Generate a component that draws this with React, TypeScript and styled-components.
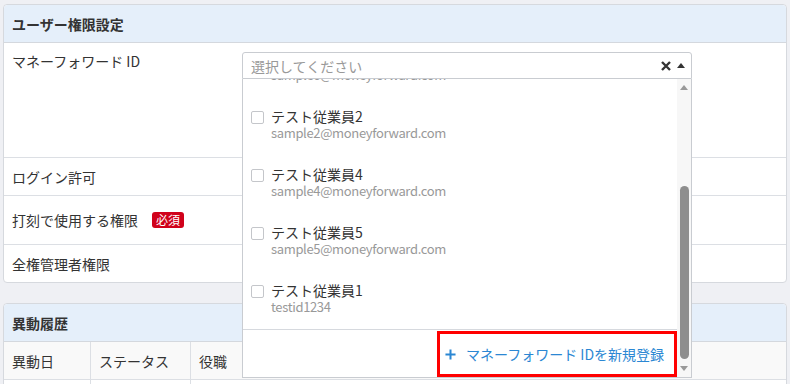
import React from "react";
import styled, { createGlobalStyle } from "styled-components";

const GlobalStyle = createGlobalStyle`
  body {
    margin: 0;
    background: #eff0f4;
    font-family: "Noto Sans CJK JP", "Noto Sans", sans-serif;
    font-size: 14px;
    color: #333;
  }
`;

type Employee = { name: string; email: string };

const employees: Employee[] = [
  { name: "テスト従業員6", email: "sample6@moneyforward.com" },
  { name: "テスト従業員2", email: "sample2@moneyforward.com" },
  { name: "テスト従業員4", email: "sample4@moneyforward.com" },
  { name: "テスト従業員5", email: "sample5@moneyforward.com" },
  { name: "テスト従業員1", email: "testid1234" },
];

const App = () => {
  return (
    <>
      <GlobalStyle />
      <Page>
        <Card>
          <CardHeader>ユーザー権限設定</CardHeader>
          <Row $height={114} $align="flex-start">
            <Label $top={9}>マネーフォワード ID</Label>
            <Value>
              <SelectWrap>
                <Select>
                  <Placeholder>選択してください</Placeholder>
                  <ClearIcon viewBox="0 0 10 10">
                    <path d="M1 1 L9 9 M9 1 L1 9" />
                  </ClearIcon>
                  <Caret $dir="up" />
                </Select>
                <Dropdown>
                  <ListColumn>
                    <Options>
                      <OptionsInner>
                        {employees.map((e) => (
                          <Option key={e.name}>
                            <Check />
                            <OptionText>
                              <Name>{e.name}</Name>
                              <Email>{e.email}</Email>
                            </OptionText>
                          </Option>
                        ))}
                      </OptionsInner>
                    </Options>
                    <Footer>
                      <AddButton>
                        <PlusIcon viewBox="0 0 12 12">
                          <path d="M6 0.5 V11.5 M0.5 6 H11.5" />
                        </PlusIcon>
                        マネーフォワード IDを新規登録
                      </AddButton>
                    </Footer>
                  </ListColumn>
                  <Scrollbar>
                    <ArrowBox>
                      <Caret $dir="up" $color="#999" />
                    </ArrowBox>
                    <Track>
                      <Thumb $top={90} $height={173} />
                    </Track>
                    <ArrowBox>
                      <Caret $dir="down" $color="#999" />
                    </ArrowBox>
                  </Scrollbar>
                </Dropdown>
              </SelectWrap>
            </Value>
          </Row>
          <Row $height={37}>
            <Label>ログイン許可</Label>
            <Value />
          </Row>
          <Row $height={48}>
            <Label>
              打刻で使用する権限<Badge>必須</Badge>
            </Label>
            <Value />
          </Row>
          <Row $height={37} $last>
            <Label>全権管理者権限</Label>
            <Value />
          </Row>
        </Card>

        <Card>
          <CardHeader>異動履歴</CardHeader>
          <TableRow $head>
            <Cell>異動日</Cell>
            <Cell>ステータス</Cell>
            <Cell>役職</Cell>
          </TableRow>
          <TableRow>
            <Cell />
            <Cell />
            <Cell />
          </TableRow>
        </Card>
      </Page>
    </>
  );
};

export default App;

const Page = styled.div`
  padding: 4px 3px;
  display: flex;
  flex-direction: column;
  gap: 20px;
`;

const Card = styled.div`
  background: #fff;
  border: 1px solid #d6d9de;
  border-radius: 4px;
`;

const CardHeader = styled.div`
  height: 37px;
  display: flex;
  align-items: center;
  padding: 0 8px;
  background: #e5effa;
  border-bottom: 1px solid #d4d8de;
  border-radius: 4px 4px 0 0;
  font-weight: bold;
  line-height: 18px;
`;

const Row = styled.div<{ $height: number; $align?: string; $last?: boolean }>`
  display: grid;
  grid-template-columns: 238px 1fr;
  align-items: ${(p) => p.$align || "center"};
  height: ${(p) => p.$height}px;
  border-bottom: ${(p) => (p.$last ? "none" : "1px solid #dcdfe4")};
`;

const Label = styled.div<{ $top?: number }>`
  display: flex;
  align-items: center;
  padding: ${(p) => p.$top || 0}px 8px 0;
  line-height: 18px;
`;

const Value = styled.div`
  align-self: stretch;
  padding-top: 9px;
`;

const Badge = styled.span`
  margin-left: 14px;
  height: 16px;
  padding: 0 4px;
  border-radius: 3px;
  background: #d0021b;
  color: #fff;
  font-size: 12px;
  line-height: 16px;
`;

const SelectWrap = styled.div`
  position: relative;
  width: 450px;
`;

const Select = styled.div`
  height: 25px;
  border: 1px solid #c9ccd1;
  border-radius: 3px 3px 0 0;
  display: flex;
  align-items: center;
  padding: 0 6px 0 8px;
  background: #fff;
`;

const Placeholder = styled.span`
  flex: 1;
  color: #999;
  line-height: 18px;
`;

const ClearIcon = styled.svg`
  width: 10px;
  height: 10px;
  margin-right: 6px;
  stroke: #333;
  stroke-width: 2.4;
  fill: none;
`;

const Caret = styled.span<{ $dir: "up" | "down"; $color?: string }>`
  width: 0;
  height: 0;
  border-left: 4px solid transparent;
  border-right: 4px solid transparent;
  ${(p) =>
    p.$dir === "up"
      ? `border-bottom: 5px solid ${p.$color || "#333"};`
      : `border-top: 5px solid ${p.$color || "#333"};`}
`;

const Dropdown = styled.div`
  position: absolute;
  z-index: 10;
  top: 100%;
  left: 0;
  width: 450px;
  height: 299px;
  box-sizing: border-box;
  background: #fff;
  border: 1px solid #c9ccd1;
  border-top: none;
  display: flex;
`;

const ListColumn = styled.div`
  flex: 1;
  display: flex;
  flex-direction: column;
  min-width: 0;
`;

const Options = styled.div`
  height: 250px;
  overflow: hidden;
  border-bottom: 1px solid #d6d9de;
`;

const OptionsInner = styled.div`
  margin-top: -42px;
`;

const Option = styled.div`
  height: 58px;
  box-sizing: border-box;
  padding: 12px 8px;
  display: flex;
  align-items: flex-start;
  gap: 7px;
`;

const Check = styled.span`
  width: 11px;
  height: 11px;
  margin-top: 4px;
  border: 1px solid #c4c6ca;
  border-radius: 2px;
  background: #fff;
`;

const OptionText = styled.div`
  display: flex;
  flex-direction: column;
`;

const Name = styled.span`
  font-size: 14px;
  line-height: 18px;
  color: #333;
`;

const Email = styled.span`
  font-size: 13px;
  line-height: 16px;
  letter-spacing: -0.35px;
  color: #999;
`;

const Footer = styled.div`
  flex: 1;
  display: flex;
  justify-content: flex-end;
  align-items: flex-start;
  padding-top: 1px;
`;

const AddButton = styled.button`
  width: 240px;
  height: 46px;
  box-sizing: border-box;
  border: 3px solid #ff0000;
  background: #fff;
  color: #2b87d3;
  font-family: inherit;
  font-size: 14px;
  line-height: 18px;
  display: flex;
  align-items: center;
  padding: 0 0 0 5px;
  white-space: nowrap;
`;

const PlusIcon = styled.svg`
  width: 11px;
  height: 11px;
  margin-right: 10px;
  stroke: #2b87d3;
  stroke-width: 2.2;
  fill: none;
`;

const Scrollbar = styled.div`
  width: 14px;
  background: #f7f7f7;
  display: flex;
  flex-direction: column;
`;

const ArrowBox = styled.div`
  height: 17px;
  display: flex;
  align-items: center;
  justify-content: center;
`;

const Track = styled.div`
  flex: 1;
  display: flex;
  justify-content: center;
`;

const Thumb = styled.div<{ $top: number; $height: number }>`
  width: 9px;
  margin-top: ${(p) => p.$top}px;
  height: ${(p) => p.$height}px;
  border-radius: 5px;
  background: #8e8e8e;
`;

const TableRow = styled.div<{ $head?: boolean }>`
  display: grid;
  grid-template-columns: 87px 100px 1fr;
  height: 37px;
  background: ${(p) => (p.$head ? "#f9f9f9" : "#fff")};
  border-bottom: 1px solid #dcdfe4;
`;

const Cell = styled.div`
  display: flex;
  align-items: center;
  padding: 0 8px;
  line-height: 18px;
  border-right: 1px solid #dcdfe4;
  &:last-child {
    border-right: none;
  }
`;
